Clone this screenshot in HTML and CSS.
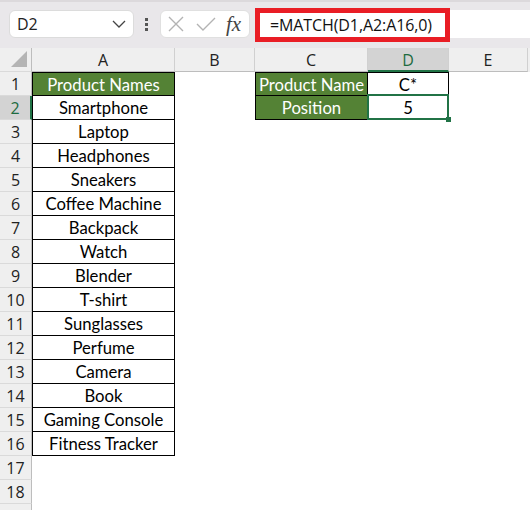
FILE: index.html
```html
<!DOCTYPE html>
<html lang="en">

<head>
    <meta charset="UTF-8">
    <meta name="viewport" content="width=device-width, initial-scale=1.0">
    <title>MATCH wildcard</title>
    <link rel="stylesheet" href="styles.css">
</head>

<body>

    <div class="bar">
        <div class="namebox">
            <span>D2</span>
            <svg width="14" height="8" viewBox="0 0 14 8"><path d="M1 1 L7 7 L13 1" fill="none" stroke="#444" stroke-width="1.3"/></svg>
        </div>
        <div class="dots"><i></i><i></i><i></i></div>
        <div class="fxbox">
            <svg width="16" height="16" viewBox="0 0 16 16"><path d="M1 1 L15 15 M15 1 L1 15" stroke="#b3b3b3" stroke-width="1.4"/></svg>
            <svg width="20" height="14" viewBox="0 0 20 14"><path d="M1 7 L7 13 L19 1" fill="none" stroke="#b3b3b3" stroke-width="1.4"/></svg>
            <span class="fx">fx</span>
        </div>
        <div class="formula">
            <div class="mark">=MATCH(D1,A2:A16,0)</div>
        </div>
    </div>

    <div class="sheet">
        <div class="row head">
            <div class="rh corner"><svg width="16" height="16" viewBox="0 0 16 16"><path d="M16 0 L16 16 L0 16 Z" fill="#b4b4b4"/></svg></div>
            <div class="a">A</div>
            <div class="b">B</div>
            <div class="cc">C</div>
            <div class="d on">D</div>
            <div class="e">E</div>
        </div>
        <div class="row">
            <div class="rh">1</div>
            <div class="a bx top lft g">Product Names</div>
            <div class="b"></div>
            <div class="cc bx top lft g">Product Name</div>
            <div class="d bx top">C*</div>
        </div>
        <div class="row">
            <div class="rh on">2</div>
            <div class="a bx lft">Smartphone</div>
            <div class="b"></div>
            <div class="cc bx lft g">Position</div>
            <div class="d bx sel">5</div>
        </div>
        <div class="row"><div class="rh">3</div><div class="a bx lft">Laptop</div></div>
        <div class="row"><div class="rh">4</div><div class="a bx lft">Headphones</div></div>
        <div class="row"><div class="rh">5</div><div class="a bx lft">Sneakers</div></div>
        <div class="row"><div class="rh">6</div><div class="a bx lft">Coffee Machine</div></div>
        <div class="row"><div class="rh">7</div><div class="a bx lft">Backpack</div></div>
        <div class="row"><div class="rh">8</div><div class="a bx lft">Watch</div></div>
        <div class="row"><div class="rh">9</div><div class="a bx lft">Blender</div></div>
        <div class="row"><div class="rh">10</div><div class="a bx lft">T-shirt</div></div>
        <div class="row"><div class="rh">11</div><div class="a bx lft">Sunglasses</div></div>
        <div class="row"><div class="rh">12</div><div class="a bx lft">Perfume</div></div>
        <div class="row"><div class="rh">13</div><div class="a bx lft">Camera</div></div>
        <div class="row"><div class="rh">14</div><div class="a bx lft">Book</div></div>
        <div class="row"><div class="rh">15</div><div class="a bx lft">Gaming Console</div></div>
        <div class="row"><div class="rh">16</div><div class="a bx lft">Fitness Tracker</div></div>
        <div class="row"><div class="rh">17</div></div>
        <div class="row"><div class="rh">18</div></div>
        <div class="row"><div class="rh"></div></div>
    </div>

</body>

</html>
```

FILE: styles.css
```css
body {
    margin: 0;
    height: 510px;
    overflow: hidden;
    background: #fff;
    font-family: 'Lato', sans-serif;
    color: #000;
}

/* formula bar */
.bar {
    display: flex;
    align-items: flex-start;
    height: 48px;
    padding-top: 10px;
    box-sizing: border-box;
    background: #e9e7ea;
    border-top: 2px solid #dcd9dc;
}
.namebox {
    display: flex;
    align-items: center;
    justify-content: space-between;
    width: 125px;
    height: 28px;
    margin-left: 9px;
    margin-top: -2px;
    padding: 0 7px;
    box-sizing: border-box;
    background: #fff;
    border: 1px solid #dcdcdc;
    border-radius: 6px;
    font-family: 'Open Sans', sans-serif;
    font-size: 16px;
    color: #222;
}
.dots {
    display: flex;
    flex-direction: column;
    gap: 2px;
    margin: 6px 12px 0 11px;
}
.dots i {
    width: 3px;
    height: 3px;
    background: #555;
}
.fxbox {
    display: flex;
    align-items: center;
    gap: 12px;
    width: 90px;
    height: 28px;
    margin-top: -2px;
    padding-left: 7px;
    box-sizing: border-box;
    background: #fff;
    border: 1px solid #e0e0e0;
    border-radius: 6px;
}
.fx {
    font-family: 'Liberation Serif', serif;
    font-style: italic;
    font-size: 21px;
    color: #444;
    margin-left: -2px;
}
.formula {
    flex: 1;
    height: 28px;
    margin-left: 5px;
    margin-top: -2px;
    background: #fff;
}
.mark {
    width: 195px;
    height: 34px;
    margin-top: -2px;
    box-sizing: border-box;
    border: 5px solid #e91d25;
    padding-left: 10px;
    font-family: 'Open Sans', sans-serif;
    font-size: 16px;
    letter-spacing: -0.1px;
    line-height: 24px;
    color: #111;
}

/* grid */
.row {
    display: flex;
    height: 24px;
}
.row > div {
    height: 24px;
    box-sizing: border-box;
    display: flex;
    align-items: center;
    justify-content: center;
    font-size: 16.7px;
    padding-top: 1px;
    flex: none;
}
.rh { width: 32px; }
.a { width: 143px; }
.b { width: 80px; }
.cc { width: 113px; }
.d { width: 81px; }
.e { width: 79px; }

.head {
    background: #efefef;
}
.head > div {
    font-family: 'Open Sans', sans-serif;
    font-size: 16px !important;
    color: #222;
    border-right: 1px solid #d0d0d0;
    border-bottom: 1px solid #bdbdbd;
}
.head .corner {
    align-items: flex-end !important;
    justify-content: flex-end !important;
    padding: 0 4px 4px 0;
    border-right-color: #bdbdbd;
}
.row .rh {
    background: #efefef;
    border-right: 1px solid #bdbdbd;
    border-bottom: 1px solid #dadada;
    font-family: 'Open Sans', sans-serif;
    font-size: 16px;
    color: #222;
}
.head .on {
    background: #d3d3d3;
    color: #1d6b40;
    border-bottom: 2px solid #217346;
}
.row .rh.on {
    background: #d3d3d3;
    color: #1d6b40;
    border-right: 2px solid #217346;
}

.bx {
    border-right: 1px solid #000;
    border-bottom: 1px solid #000;
}
.top { border-top: 1px solid #000; }
.lft { border-left: 1px solid #000; }
.g {
    background: #548235;
    color: #fff;
}
.sel {
    position: relative;
}
.sel::after {
    content: "";
    position: absolute;
    left: -1px;
    top: -2px;
    right: -1px;
    bottom: -1px;
    border: 2px solid #217346;
}
.sel::before {
    content: "";
    position: absolute;
    right: -3px;
    bottom: -3px;
    width: 5px;
    height: 5px;
    background: #217346;
    z-index: 1;
}
```
